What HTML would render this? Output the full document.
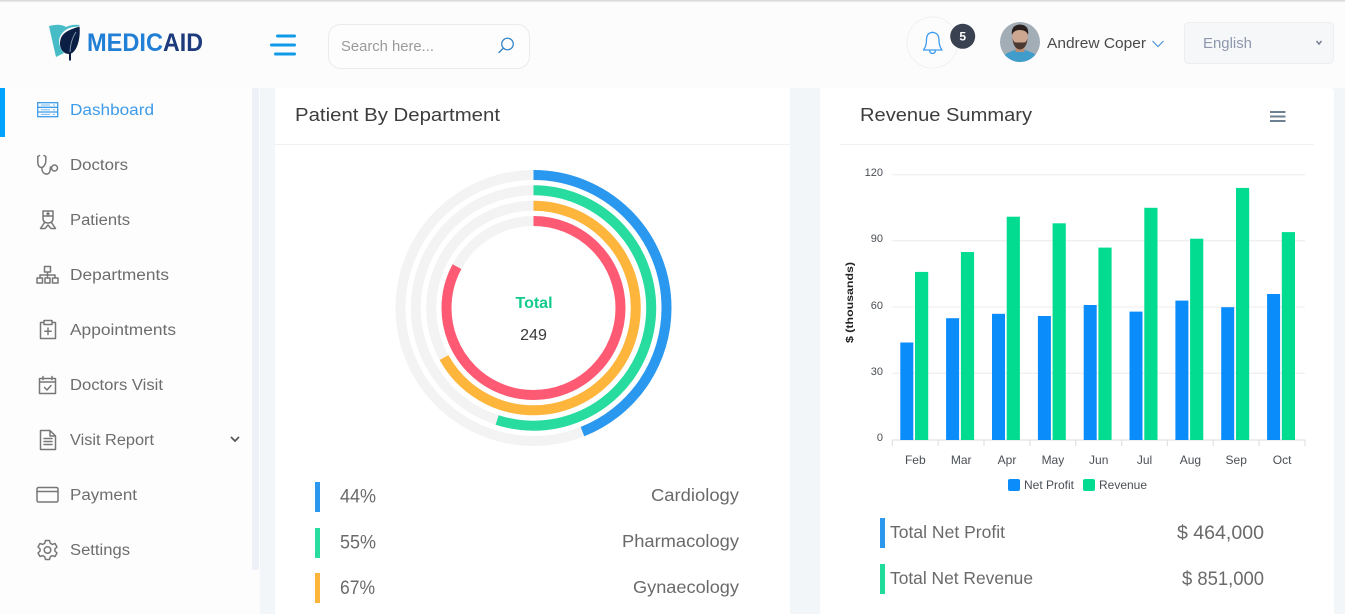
<!DOCTYPE html>
<html lang="en">
<head>
<meta charset="utf-8">
<title>Medicaid Dashboard</title>
<style>
html,body{margin:0;padding:0;background:#f3f6f9;overflow:hidden;width:1345px;height:614px}
svg{display:block}
text{font-family:"Liberation Sans",Arial,sans-serif}
.nav{font-size:15.500px;fill:#6d6d6d}
.ic{fill:none;stroke:#777;stroke-width:1.5;stroke-linecap:round;stroke-linejoin:round}
.ax{font-size:12px;fill:#4a4f55}
.big{font-size:19px;fill:#6a6a6a}
.grid{stroke:#f0f0f0;stroke-width:1.3}
.b{fill:#0a8cfb}
.g{fill:#02dc91}
</style>
</head>
<body>
<svg xmlns="http://www.w3.org/2000/svg" width="1345" height="614" viewBox="0 0 1345 614">
<defs><clipPath id="av"><circle cx="1020" cy="42" r="20"/></clipPath></defs>
<rect width="1345" height="614" fill="#f3f6f9"/>
<!-- header -->
<rect width="1345" height="88" fill="#fcfcfc"/>
<rect width="1345" height="1.6" fill="#dcdcdc"/>
<!-- sidebar -->
<rect y="88" width="260" height="526" fill="#fdfdfd"/>
<rect x="252" y="88" width="7" height="482" rx="2" fill="#eef1f8"/>
<rect x="0" y="88" width="5" height="49" fill="#00a3ff"/>

<!-- logo -->
<path d="M49 26 Q60 23 66 27 Q72 24 80 25 L78 26.500 Q62 27 59 40 Q59 48 64 53 L56 57 Q52 40 49 26Z" fill="#48bcc6"/>
<path d="M79.500 26.500 C81 40 76 54 69 54 C62 54 58 46 61 38 C64 31 72 29 79.500 26.500Z" fill="#0b1f45"/>
<path d="M76 32 C72 38 70 46 70 53" fill="none" stroke="#8295ab" stroke-width="1"/>
<path d="M70 52 L70 60.500" fill="none" stroke="#0b1f45" stroke-width="2"/>
<text x="87" y="51" font-size="25" font-weight="700" fill="#217fd6" textLength="76" lengthAdjust="spacingAndGlyphs">MEDIC</text>
<text x="163" y="51" font-size="25" font-weight="700" fill="#1c3a7c" textLength="40" lengthAdjust="spacingAndGlyphs">AID</text>

<!-- hamburger -->
<g fill="#0f9ae8">
<rect x="276" y="34.500" width="20" height="3" rx="1.500"/>
<rect x="270" y="43.500" width="26" height="3" rx="1.500"/>
<rect x="274" y="52.500" width="22" height="3" rx="1.500"/>
</g>

<!-- search -->
<rect x="328.500" y="24.500" width="201" height="44" rx="12" fill="#fdfdfd" stroke="#ebebeb"/>
<text x="341" y="51" font-size="14.500" fill="#9a9a9a" textLength="93" lengthAdjust="spacingAndGlyphs">Search here...</text>
<circle cx="507.500" cy="44" r="5.800" fill="none" stroke="#2d7fc4" stroke-width="1.200"/>
<path d="M503.300 48.200 L499 52.500" stroke="#2d7fc4" stroke-width="1.300" stroke-linecap="round"/>

<!-- bell -->
<circle cx="932.500" cy="42.500" r="25.500" fill="#fcfcfc" stroke="#f1f1f1"/>
<path d="M932.500 32.500 C937 32.500 939 36 939 40 C939 45 940.500 48 942 50 L923.500 50 C925 48 926.500 45 926.500 40 C926.500 36 928 32.500 932.500 32.500Z M932.500 32.500 V31.500 M929.500 50.500 C930 54.500 935 54.500 935.500 50.500" fill="none" stroke="#3b9bf0" stroke-width="1.300" stroke-linejoin="round"/>
<circle cx="962.700" cy="36.300" r="12.500" fill="#3a4252"/>
<text x="962.700" y="40.300" font-size="12" font-weight="700" fill="#fff" text-anchor="middle">5</text>

<!-- avatar -->
<g clip-path="url(#av)">
<rect x="1000" y="22" width="40" height="40" fill="#a3adb5"/>
<path d="M1001 62 L1002 56 Q1009 52 1015 50 L1025 50 Q1032 52 1038 56 L1039 62Z" fill="#3f9ccb"/>
<rect x="1015.500" y="44" width="9" height="8" fill="#b98d76"/>
<ellipse cx="1020" cy="37.500" rx="7.800" ry="10.500" fill="#cda78f"/>
<path d="M1012.500 38 Q1013 48.500 1020 49.500 Q1027 48.500 1027.500 38 Q1026.500 42.500 1024 42.500 L1016 42.500 Q1013.500 42.500 1012.500 38Z" fill="#4a3a32"/>
<path d="M1012 35 Q1010.500 25 1020 24.500 Q1029.500 25 1028 35 Q1026.500 30 1020 30 Q1013.500 30 1012 35Z" fill="#2a211e"/>
</g>
<text x="1047" y="48" font-size="14.500" fill="#4a4a4a" textLength="99" lengthAdjust="spacingAndGlyphs">Andrew Coper</text>
<path d="M1152.500 41 L1158 46.500 L1163.500 41" fill="none" stroke="#4c94d8" stroke-width="1.200"/>

<!-- language -->
<rect x="1184.500" y="22.500" width="149" height="41" rx="4" fill="#f6f7f9" stroke="#eceef1"/>
<text x="1203" y="48" font-size="15" fill="#8d97ad" textLength="49" lengthAdjust="spacingAndGlyphs">English</text>
<path d="M1316.500 41 L1319 44 L1321.500 41" fill="none" stroke="#7b8494" stroke-width="1.600"/>

<!-- sidebar items -->
<g fill="none" stroke="#3d9be9" stroke-width="1.300">
<rect x="37.700" y="102.700" width="20" height="14"/>
<path d="M38 107.300 H57.500 M38 112 H57.500"/>
<path d="M41 105 H50 M41 109.700 H50 M41 114.400 H50 M53 105 H55 M53 109.700 H55 M53 114.400 H55" stroke-width="1" opacity=".7"/>
</g>
<text class="nav" x="70" y="115" style="fill:#3d9be9" textLength="84" lengthAdjust="spacingAndGlyphs">Dashboard</text>

<path class="ic" d="M39.500 155.500 L37.800 156.500 V162 C37.800 168 42 168.500 44 166 C45.500 164 45.800 163 45.800 160 V156.500 L44 155.500 M41.800 168 C41.800 175 49 176 50 171 L50.500 167 M57.500 168 A3 3 0 1 1 51.500 168 A3 3 0 1 1 57.500 168Z"/>
<text class="nav" x="70" y="170" textLength="58" lengthAdjust="spacingAndGlyphs">Doctors</text>

<path class="ic" d="M43 211 H53 V218 C53 222 50.500 223 48 223 C45.500 223 43 222 43 218Z M43 216 H53 M48 212.500 V215 M46.800 213.700 H49.200 M44.500 222.500 L40.500 228.500 H45 L48 225 L51 228.500 H55.500 L51.500 222.500"/>
<text class="nav" x="70" y="225" textLength="60" lengthAdjust="spacingAndGlyphs">Patients</text>

<path class="ic" d="M44.500 266.500 H50.500 V272 H44.500Z M47.500 272 V275 M40 278 V275 H55 V278 M47.500 275 V278 M37 278 H42.500 V283 H37Z M45 278 H50 V283 H45Z M52.500 278 H58 V283 H52.500Z"/>
<text class="nav" x="70" y="280" textLength="99" lengthAdjust="spacingAndGlyphs">Departments</text>

<path class="ic" d="M44 322.500 H40.500 V338.500 H55.500 V322.500 H52 M44 320.500 H52 V324.500 H44Z M48 328 V334.500 M44.800 331.200 H51.200"/>
<text class="nav" x="70" y="335" textLength="106" lengthAdjust="spacingAndGlyphs">Appointments</text>

<path class="ic" d="M39.500 378.500 H55.500 V393.500 H39.500Z M39.500 382 H55.500 M43 376.500 V379.500 M52 376.500 V379.500 M44.500 387.500 L47 390 L51 385.500"/>
<text class="nav" x="70" y="390" textLength="93" lengthAdjust="spacingAndGlyphs">Doctors Visit</text>

<path class="ic" d="M40.500 430.500 H50 L55.500 436 V449.500 H40.500Z M50 430.500 V436 H55.500 M44 438.500 H52 M44 441.500 H52 M44 444.500 H52"/>
<text class="nav" x="70" y="445" textLength="84" lengthAdjust="spacingAndGlyphs">Visit Report</text>
<path d="M231 437 L235 441 L239 437" fill="none" stroke="#555" stroke-width="1.700"/>

<rect class="ic" x="37" y="487.500" width="21" height="14.500" rx="1.500"/>
<path class="ic" d="M37 491.500 H58"/>
<text class="nav" x="70" y="500" textLength="67" lengthAdjust="spacingAndGlyphs">Payment</text>

<circle class="ic" cx="47.500" cy="550" r="3.300"/>
<path class="ic" d="M45.500 540.500 H49.500 L50.300 543.300 L52.300 544.400 L55 543.500 L57 547 L54.900 549 V551 L57 553 L55 556.500 L52.300 555.600 L50.300 556.700 L49.500 559.500 H45.500 L44.700 556.700 L42.700 555.600 L40 556.500 L38 553 L40.100 551 V549 L38 547 L40 543.500 L42.700 544.400 L44.700 543.300Z"/>
<text class="nav" x="70" y="555" textLength="60" lengthAdjust="spacingAndGlyphs">Settings</text>

<!-- card 1 -->
<rect x="275" y="88" width="515" height="526" fill="#fff"/>
<rect x="275" y="144" width="515" height="1" fill="#f0f0f0"/>
<text x="295" y="121" font-size="18.500" fill="#3d3d3d" textLength="205" lengthAdjust="spacingAndGlyphs">Patient By Department</text>

<g fill="none" stroke-width="10">
<circle cx="533.500" cy="308" r="133" stroke="#f3f3f3"/>
<circle cx="533.500" cy="308" r="117.700" stroke="#f3f3f3"/>
<circle cx="533.500" cy="308" r="102.300" stroke="#f3f3f3"/>
<circle cx="533.500" cy="308" r="87" stroke="#f3f3f3"/>
<g transform="rotate(-90 533.500 308)">
<circle cx="533.500" cy="308" r="133" stroke="#2b98f0" pathLength="100" stroke-dasharray="44 100"/>
<circle cx="533.500" cy="308" r="117.700" stroke="#28dc9f" pathLength="100" stroke-dasharray="55 100"/>
<circle cx="533.500" cy="308" r="102.300" stroke="#fdb53c" pathLength="100" stroke-dasharray="67 100"/>
<circle cx="533.500" cy="308" r="87" stroke="#fe5a74" pathLength="100" stroke-dasharray="83 100"/>
</g>
</g>
<text x="534" y="308" font-size="16" font-weight="700" fill="#14ca8e" text-anchor="middle">Total</text>
<text x="533.500" y="340" font-size="16" fill="#3a3a3a" text-anchor="middle">249</text>

<rect x="315" y="482" width="5" height="30" fill="#2b98f0"/>
<rect x="315" y="528" width="5" height="30" fill="#28dc9f"/>
<rect x="315" y="573" width="5" height="30" fill="#fdb53c"/>
<text class="big" x="340" y="502.500" textLength="36" lengthAdjust="spacingAndGlyphs">44%</text>
<text class="big" x="340" y="548.500" textLength="36" lengthAdjust="spacingAndGlyphs">55%</text>
<text class="big" x="340" y="594" textLength="35" lengthAdjust="spacingAndGlyphs">67%</text>
<text x="651" y="501" font-size="17.500" fill="#6a6a6a" textLength="88" lengthAdjust="spacingAndGlyphs">Cardiology</text>
<text x="622" y="547" font-size="17.500" fill="#6a6a6a" textLength="117" lengthAdjust="spacingAndGlyphs">Pharmacology</text>
<text x="633" y="593" font-size="17.500" fill="#6a6a6a" textLength="106" lengthAdjust="spacingAndGlyphs">Gynaecology</text>

<!-- card 2 -->
<path d="M820 88 H1330 Q1334 88 1334 92 V614 H820Z" fill="#fff"/>
<rect x="840" y="144" width="474" height="1" fill="#f0f0f0"/>
<text x="860" y="121" font-size="18.500" fill="#3d3d3d" textLength="172" lengthAdjust="spacingAndGlyphs">Revenue Summary</text>
<g fill="#6e8192">
<rect x="1270" y="111" width="15.500" height="2"/>
<rect x="1270" y="115.500" width="15.500" height="2"/>
<rect x="1270" y="120" width="15.500" height="2"/>
</g>

<!-- chart -->
<path class="grid" d="M892.300 174.700 H1305 M892.300 240.700 H1305 M892.300 307 H1305 M892.300 373.300 H1305"/>
<path d="M892.300 440 H1305 M892.300 440 V446 M938.200 440 V446 M984 440 V446 M1029.900 440 V446 M1075.700 440 V446 M1121.600 440 V446 M1167.400 440 V446 M1213.300 440 V446 M1259.100 440 V446 M1305 440 V446" fill="none" stroke="#e2e2e2" stroke-width="1.200"/>

<g text-anchor="end" class="ax" style="font-size:11px">
<text x="883" y="176">120</text>
<text x="883" y="242">90</text>
<text x="883" y="309">60</text>
<text x="883" y="375">30</text>
<text x="883" y="441">0</text>
</g>
<text transform="translate(853 302.500) rotate(-90)" font-size="10.500" font-weight="700" fill="#222" text-anchor="middle" textLength="81" lengthAdjust="spacingAndGlyphs">$ (thousands)</text>

<rect class="b" x="900.300" y="342.500" width="13" height="97.500"/>
<rect class="b" x="946.100" y="318.200" width="13" height="121.800"/>
<rect class="b" x="992" y="313.800" width="13" height="126.200"/>
<rect class="b" x="1037.900" y="316" width="13" height="124"/>
<rect class="b" x="1083.700" y="305" width="13" height="135"/>
<rect class="b" x="1129.500" y="311.600" width="13" height="128.400"/>
<rect class="b" x="1175.400" y="300.600" width="13" height="139.400"/>
<rect class="b" x="1221.200" y="307.200" width="13" height="132.800"/>
<rect class="b" x="1267.100" y="294" width="13" height="146"/>

<rect class="g" x="915" y="271.900" width="13.200" height="168.100"/>
<rect class="g" x="960.900" y="252" width="13.200" height="188"/>
<rect class="g" x="1006.700" y="216.700" width="13.200" height="223.300"/>
<rect class="g" x="1052.600" y="223.300" width="13.200" height="216.700"/>
<rect class="g" x="1098.400" y="247.600" width="13.200" height="192.400"/>
<rect class="g" x="1144.300" y="207.800" width="13.200" height="232.200"/>
<rect class="g" x="1190.100" y="238.700" width="13.200" height="201.300"/>
<rect class="g" x="1236" y="187.900" width="13.200" height="252.100"/>
<rect class="g" x="1281.800" y="232.100" width="13.200" height="207.900"/>

<g text-anchor="middle" class="ax">
<text x="915.300" y="464">Feb</text>
<text x="961.200" y="464">Mar</text>
<text x="1007" y="464">Apr</text>
<text x="1052.900" y="464">May</text>
<text x="1098.700" y="464">Jun</text>
<text x="1144.500" y="464">Jul</text>
<text x="1190.400" y="464">Aug</text>
<text x="1236.200" y="464">Sep</text>
<text x="1282.100" y="464">Oct</text>
</g>
<rect class="b" x="1008" y="479" width="12" height="12" rx="2"/>
<text class="ax" x="1024" y="489" textLength="50" lengthAdjust="spacingAndGlyphs">Net Profit</text>
<rect class="g" x="1083" y="479" width="12" height="12" rx="2"/>
<text class="ax" x="1099" y="489" textLength="48" lengthAdjust="spacingAndGlyphs">Revenue</text>

<!-- totals -->
<rect x="880" y="518" width="5" height="30" fill="#2b98f0"/>
<rect x="880" y="564" width="5" height="30" fill="#1fdc9a"/>
<text x="890" y="538" font-size="17.500" fill="#6a6a6a" textLength="115" lengthAdjust="spacingAndGlyphs">Total Net Profit</text>
<text x="890" y="584" font-size="17.500" fill="#6a6a6a" textLength="143" lengthAdjust="spacingAndGlyphs">Total Net Revenue</text>
<text x="1177" y="539" font-size="19" fill="#6a6a6a" textLength="87" lengthAdjust="spacingAndGlyphs">$ 464,000</text>
<text x="1182" y="585" font-size="19" fill="#6a6a6a" textLength="82" lengthAdjust="spacingAndGlyphs">$ 851,000</text>
</svg>
</body>
</html>
